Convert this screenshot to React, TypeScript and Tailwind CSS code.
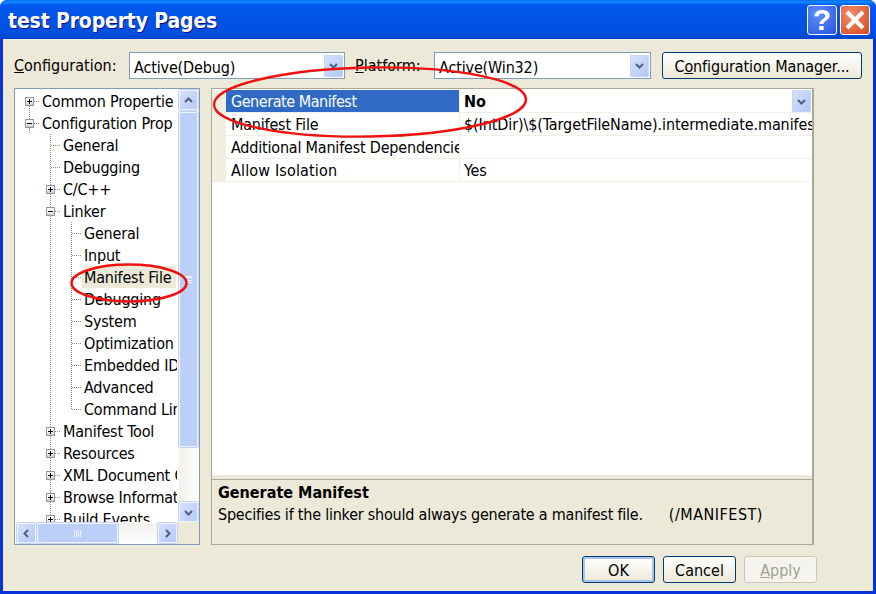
type Cell = "plus" | "minus" | "tee" | "elbow" | "pipe" | "plusDown" | "empty";

type TreeRowData = { label: string; cells: Cell[]; selected?: boolean };

const treeRows: TreeRowData[] = [
  { label: "Common Propertie", cells: ["plusDown"] },
  { label: "Configuration Prop", cells: ["minus"] },
  { label: "General", cells: ["empty", "tee"] },
  { label: "Debugging", cells: ["empty", "tee"] },
  { label: "C/C++", cells: ["empty", "plus"] },
  { label: "Linker", cells: ["empty", "minus"] },
  { label: "General", cells: ["empty", "pipe", "tee"] },
  { label: "Input", cells: ["empty", "pipe", "tee"] },
  { label: "Manifest File", cells: ["empty", "pipe", "tee"], selected: true },
  { label: "Debugging", cells: ["empty", "pipe", "tee"] },
  { label: "System", cells: ["empty", "pipe", "tee"] },
  { label: "Optimization", cells: ["empty", "pipe", "tee"] },
  { label: "Embedded IDL", cells: ["empty", "pipe", "tee"] },
  { label: "Advanced", cells: ["empty", "pipe", "tee"] },
  { label: "Command Line", cells: ["empty", "pipe", "elbow"] },
  { label: "Manifest Tool", cells: ["empty", "plus"] },
  { label: "Resources", cells: ["empty", "plus"] },
  { label: "XML Document Generator", cells: ["empty", "plus"] },
  { label: "Browse Information", cells: ["empty", "plus"] },
  { label: "Build Events", cells: ["empty", "plus"] },
];

const gridRows = [
  { name: "Generate Manifest", value: "No", selected: true, tracking: "tracking-[-0.45px]" },
  { name: "Manifest File", value: "$(IntDir)\\$(TargetFileName).intermediate.manifest", tracking: "tracking-[-0.2px]" },
  { name: "Additional Manifest Dependencies", value: "", tracking: "tracking-[-0.2px]" },
  { name: "Allow Isolation", value: "Yes", tracking: "tracking-[0.15px]" },
];

const TreeCell = ({ type }: { type: Cell }) => {
  const expander = type === "plus" || type === "minus" || type === "plusDown";
  return (
    <svg width="21" height="22" viewBox="0 0 21 22" className="shrink-0">
      <g stroke="#8f8f85" strokeDasharray="1 1" fill="none">
        {(type === "pipe" || type === "tee" || type === "plus" || type === "minus") && (
          <line x1="10.5" y1="0" x2="10.5" y2="22" />
        )}
        {type === "plusDown" && <line x1="10.5" y1="12" x2="10.5" y2="22" />}
        {type === "elbow" && <line x1="10.5" y1="0" x2="10.5" y2="12" />}
        {(type === "tee" || type === "elbow") && <line x1="11" y1="11.5" x2="21" y2="11.5" />}
        {expander && <line x1="15" y1="11.5" x2="21" y2="11.5" />}
      </g>
      {expander && (
        <g>
          <defs>
            <linearGradient id="exp" x1="0" y1="0" x2="0" y2="1">
              <stop offset="0" stopColor="#ffffff" />
              <stop offset="0.6" stopColor="#f1efe6" />
              <stop offset="1" stopColor="#c5c2b4" />
            </linearGradient>
          </defs>
          <rect x="6.5" y="7.5" width="8" height="8" fill="url(#exp)" stroke="#8c9aa8" />
          <line x1="8" y1="11.5" x2="13" y2="11.5" stroke="#000" />
          {type !== "minus" && <line x1="10.5" y1="9" x2="10.5" y2="14" stroke="#000" />}
        </g>
      )}
    </svg>
  );
};

const Chevron = ({ dir }: { dir: "up" | "down" | "left" | "right" }) => {
  const points = {
    up: "2,7 5.5,3.5 9,7",
    down: "2,4 5.5,7.5 9,4",
    left: "7,2 3.5,5.5 7,9",
    right: "4,2 7.5,5.5 4,9",
  }[dir];
  return (
    <svg width="11" height="11" viewBox="0 0 11 11">
      <polyline points={points} fill="none" stroke="#4d6185" strokeWidth="2" />
    </svg>
  );
};

const ScrollButton = ({ dir, className }: { dir: "up" | "down" | "left" | "right"; className: string }) => (
  <div
    className={`flex shrink-0 items-center justify-center rounded-[2px] border border-[#eef3fe] bg-gradient-to-br from-[#d5e1fd] to-[#b5c9f8] shadow-[0_0_0_1px_#c3d3f5] ${className}`}
  >
    <Chevron dir={dir} />
  </div>
);

const ComboButton = ({ className = "" }: { className?: string }) => (
  <div
    className={`flex h-[22px] w-[19px] items-center justify-center rounded-[1px] border border-[#c4d3f7] bg-gradient-to-br from-[#d5e1fd] to-[#b2c7f7] ${className}`}
  >
    <Chevron dir="down" />
  </div>
);

const Combo = ({ text, className }: { text: string; className: string }) => (
  <div className={`flex h-[27px] items-center justify-between border border-[#7f9db9] bg-white pl-[4px] pr-[1px] ${className}`}>
    <span className="translate-y-[2px] tracking-[-0.15px]">{text}</span>
    <ComboButton />
  </div>
);

const DialogButton = ({ children, disabled, primary }: { children: React.ReactNode; disabled?: boolean; primary?: boolean }) => (
  <div
    className={`flex h-[27px] w-[73px] items-center justify-center rounded-[3px] border ${
      disabled
        ? "border-[#c9c7ba] bg-[#f4f3ee] text-[#a1a192]"
        : primary
          ? "border-[#003c74] bg-gradient-to-b from-white to-[#ece9d8] shadow-[inset_0_0_0_2px_#a9c4ed]"
          : "border-[#003c74] bg-gradient-to-b from-white to-[#ece9d8]"
    }`}
  >
    <span className="translate-y-px">{children}</span>
  </div>
);

const TreeRow = ({ row }: { row: TreeRowData }) => (
  <div className="flex h-[22px] shrink-0 items-center pl-[4px]">
    {row.cells.map((cell, i) => (
      <TreeCell key={i} type={cell} />
    ))}
    <span
      className={`flex h-[22px] items-center whitespace-nowrap pl-[2px] pt-[2px] tracking-[-0.2px] ${
        row.selected ? "bg-[#ece9d8] pr-[5px]" : "pr-[1px]"
      }`}
    >
      {row.label}
    </span>
  </div>
);

export default function App() {
  return (
    <div className="relative flex h-[594px] w-[876px] flex-col overflow-hidden rounded-t-[7px] bg-[#0831d9] font-['DejaVu_Sans_Condensed','DejaVu_Sans',sans-serif] text-[16px] leading-none text-black [font-stretch:condensed]">
      <div className="flex h-[39px] shrink-0 items-center justify-between bg-[linear-gradient(#0a6af0_0px,#0f8bff_2px,#0058ee_5px,#0054e3_20px,#0050e0_32px,#0046d0_39px)] pl-[8px] pr-[6px]">
        <span className="translate-y-[2px] text-[21px] font-bold tracking-[-0.15px] text-white [text-shadow:1px_1px_0_#0f1089]">
          test Property Pages
        </span>
        <div className="flex gap-[3px]">
          <div className="flex h-[30px] w-[30px] items-center justify-center rounded-[3px] border border-white bg-[radial-gradient(circle_at_35%_30%,#5f8dff,#2a55d8)] font-['Liberation_Sans',sans-serif] text-[30px] font-bold text-white">
            ?
          </div>
          <div className="flex h-[30px] w-[30px] items-center justify-center rounded-[3px] border border-white bg-[radial-gradient(circle_at_35%_30%,#ee8d6d,#d9491e)]">
            <svg width="24" height="24" viewBox="0 0 24 24">
              <path d="M4 4 L20 20 M20 4 L4 20" stroke="#fff" strokeWidth="4" fill="none" />
            </svg>
          </div>
        </div>
      </div>

      <div className="mx-[3px] mb-[3px] flex min-h-0 flex-1 flex-col bg-[#ece9d8] pl-[11px] pt-[13px]">
        <div className="flex h-[27px] items-center">
          <span className="w-[115px]">
            <u>C</u>onfiguration:
          </span>
          <Combo text="Active(Debug)" className="w-[216px]" />
          <span className="ml-[10px] w-[79px]">
            <u>P</u>latform:
          </span>
          <Combo text="Active(Win32)" className="w-[217px]" />
          <div className="ml-[11px] flex h-[27px] w-[200px] items-center justify-center rounded-[3px] border border-[#003c74] bg-gradient-to-b from-white to-[#ece9d8]">
            <span className="translate-y-px tracking-[-0.1px]">
              C<u>o</u>nfiguration Manager...
            </span>
          </div>
        </div>

        <div className="mt-[9px] flex h-[457px] gap-[11px]">
          <div className="flex w-[186px] flex-col border border-[#7f9db9] bg-white">
            <div className="flex min-h-0 flex-1 pt-[1px]">
              <div className="flex w-[162px] flex-col overflow-hidden">
                {treeRows.map((row, i) => (
                  <TreeRow key={i} row={row} />
                ))}
              </div>
              <div className="ml-[2px] flex w-[19px] flex-col bg-gradient-to-r from-[#f3f1ec] to-[#fefefe]">
                <ScrollButton dir="up" className="h-[20px]" />
                <div className="mt-[2px] flex h-[335px] shrink-0 items-center justify-center rounded-[2px] border border-[#eef3fe] bg-[#bccff8] shadow-[0_0_0_1px_#c3d3f5]">
                  <div className="h-[7px] w-[7px] border-y border-[#eef3fe] bg-[linear-gradient(#eef3fe_1px,transparent_1px,transparent_3px,#eef3fe_3px,#eef3fe_4px,transparent_4px)]" />
                </div>
                <div className="flex-1" />
                <ScrollButton dir="down" className="h-[20px]" />
              </div>
            </div>
            <div className="flex h-[22px] shrink-0 items-center pl-[2px]">
              <div className="flex h-[20px] w-[160px] items-center bg-gradient-to-b from-[#f3f1ec] to-[#fefefe]">
                <ScrollButton dir="left" className="h-[20px] w-[19px]" />
                <div className="ml-[1px] flex h-[20px] w-[81px] items-center justify-center rounded-[2px] border border-[#eef3fe] bg-[#bccff8] shadow-[0_0_0_1px_#c3d3f5]">
                  <div className="h-[7px] w-[7px] bg-[linear-gradient(90deg,#eef3fe_1px,transparent_1px,transparent_2px,#eef3fe_2px,#eef3fe_3px,transparent_3px,transparent_4px,#eef3fe_4px,#eef3fe_5px,transparent_5px,transparent_6px,#eef3fe_6px)]" />
                </div>
                <div className="flex-1" />
                <ScrollButton dir="right" className="h-[20px] w-[19px]" />
              </div>
              <div className="ml-[1px] h-[22px] flex-1 bg-[#ece9d8]" />
            </div>
          </div>

          <div className="flex w-[603px] flex-col border-y border-l border-r-2 border-[#aca899] bg-white">
            <div className="flex flex-1 flex-col pt-[1px]">
              {gridRows.map((row) => (
                <div key={row.name} className="flex h-[23px] shrink-0">
                  <div className="w-[14px] shrink-0 bg-[#f1efe2]" />
                  <div
                    className={`flex w-[233px] shrink-0 items-center overflow-hidden whitespace-nowrap border-b border-[#f1efe2] pl-[5px] pt-[2px] ${row.tracking} ${
                      row.selected ? "bg-[#316ac5] text-white" : ""
                    }`}
                  >
                    {row.name}
                  </div>
                  <div className="flex min-w-0 flex-1 items-center justify-between overflow-hidden whitespace-nowrap border-b border-l border-[#f1efe2] pl-[4px] pr-[1px]">
                    <span className={`translate-y-px ${row.selected ? "font-bold" : "tracking-[-0.1px]"}`}>{row.value}</span>
                    {row.selected && <ComboButton className="h-[21px]" />}
                  </div>
                </div>
              ))}
            </div>
            <div className="flex h-[69px] shrink-0 flex-col bg-[#ece9d8] pl-[6px]">
              <div className="-ml-[6px] mb-[5px] h-[5px] border-b border-[#aca899]" />
              <div className="font-bold">Generate Manifest</div>
              <div className="mt-[6px] flex whitespace-nowrap">
                <span className="tracking-[-0.22px]">Specifies if the linker should always generate a manifest file.</span>
                <span className="ml-[26px] tracking-[0.5px]">(/MANIFEST)</span>
              </div>
            </div>
          </div>
        </div>

        <div className="mt-[11px] flex justify-end gap-[8px] pr-[56px]">
          <DialogButton primary>OK</DialogButton>
          <DialogButton>Cancel</DialogButton>
          <DialogButton disabled>
            <u>A</u>pply
          </DialogButton>
        </div>
      </div>

      <svg width="876" height="594" viewBox="0 0 876 594" className="pointer-events-none absolute left-0 top-0">
        <ellipse cx="370" cy="102" rx="156" ry="34.5" fill="none" stroke="#f01010" strokeWidth="2.4" transform="rotate(-1 370 102)" />
        <ellipse cx="129" cy="283" rx="57.5" ry="18.5" fill="none" stroke="#f01010" strokeWidth="2.6" />
      </svg>
    </div>
  );
}
